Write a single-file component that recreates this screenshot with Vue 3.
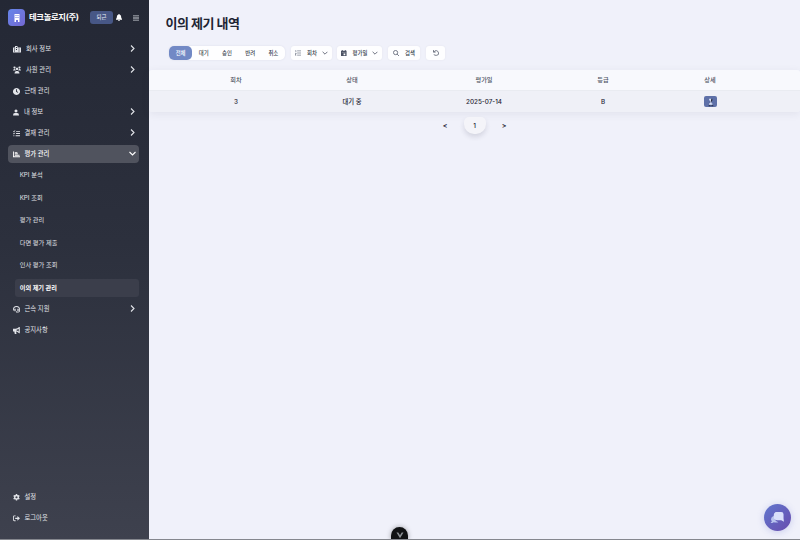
<script setup>
const icons = {
  company: 'M0 5h4V2h5v3h7v10H0zM2 7v2h2V7zm0 4v2h2v-2zm4-7v2h2V4zm0 4v2h2V8zm5-1v2h2V7zm0 4v2h2v-2z',
  users: 'M8 3a2.500 2.500 0 1 0 .01 0M3 1a2 2 0 1 0 .01 0M13 1a2 2 0 1 0 .01 0M0 9q0-3 3-3h1.500q0 2 1.500 3zM16 9q0-3-3-3h-1.500q0 2-1.500 3zM3 15q0-5 3.500-5h3q3.500 0 3.500 5z',
  clock: 'M8 0a8 8 0 1 0 .01 0M7 3h2v4.500l3 2-1 1.500-4-2.500z',
  user: 'M8 0a4 4 0 1 0 .01 0M0 16q0-6.500 5-6.500h6q5 0 5 6.500z',
  list: 'M0 3l1-1 1 1 2.500-2.500 1 1L2 5zM0 8l1-1 1 1 2.500-2.500 1 1L2 10zM1 12h2v2H1zM7 2h9v2H7zM7 7h9v2H7zM6 12h10v2H6z',
  chart: 'M0 1h2v11h14v2.500H0zM4 2h6v2.200H4zM4 5.300h7v2.200H4zM4 8.600h11v2.200H4z',
  headset: 'M8 0Q0 0 0 8v2h2V8q0-6 6-6t6 6v3q0 2-2 2H9v-1H7v3h5q4 0 4-4V8q0-8-8-8M3 6h3v6H5q-2 0-2-2zM10 6h3v4q0 2-2 2h-1z',
  horn: 'M0 4h6q4 0 8-4h1.500v14H14q-4-4-7-4l1 6H4l-1-6H0zM8 6v2q2 0 5 2V4Q10 6 8 6',
  gear: 'M6.500 0h3l.5 2.300 1.500.8 2.300-.8 1.500 2.600-1.700 1.600v2l1.700 1.600-1.500 2.600-2.300-.8-1.500.8-.5 2.300h-3L6 12.700l-1.500-.8-2.300.8-1.500-2.600 1.700-1.600v-2L.7 4.900l1.500-2.600 2.300.8L6 2.300zM8 5a2.500 2.500 0 1 0 .01 0',
  logout: 'M6 1H3Q0 1 0 4v7q0 3 3 3h3v-2H3q-1 0-1-1V4q0-1 1-1h3zM5 6h5V2l6 5.500-6 5.500V9H5z'
}
const top = [
  { label: '회사 정보', icon: 'company', arrow: true, wide: true },
  { label: '사원 관리', icon: 'users', arrow: true, wide: true },
  { label: '근태 관리', icon: 'clock' },
  { label: '내 정보', icon: 'user', arrow: true, narrow: true },
  { label: '결재 관리', icon: 'list', arrow: true },
  { label: '평가 관리', icon: 'chart', arrow: true, active: true }
]
const sub = ['KPI 분석', 'KPI 조회', '평가 관리', '다면 평가 제출', '인사 평가 조회', '이의 제기 관리']
const lower = [
  { label: '근속 지원', icon: 'headset', arrow: true },
  { label: '공지사항', icon: 'horn' }
]
const footer = [
  { label: '설정', icon: 'gear' },
  { label: '로그아웃', icon: 'logout' }
]
const groups = [{ key: 'top', items: top, sub }, { key: 'lower', items: lower }, { key: 'footer', items: footer }]
const tabs = ['전체', '대기', '승인', '반려', '취소']
const heads = ['회차', '상태', '평가일', '등급', '상세']
</script>

<template>
  <div class="app">
    <aside class="sidebar">
      <header class="brand">
        <span class="logo"><svg viewBox="0 0 12 16" width="6" height="8"><path fill="#fff" fill-rule="evenodd" d="M1 0h10v16H8v-4H4v4H1zM3 2v2h2V2zm4 0v2h2V2zM3 6v2h2V6zm4 0v2h2V6z" /></svg></span>
        <strong>테크놀로지(주)</strong>
        <button class="leave">퇴근</button>
        <svg class="bell" viewBox="0 0 14 16" width="6" height="7"><path fill="#fff" d="M6 0h2v1q4 1 4 5 0 4 2 5v2H0v-2q2-1 2-5 0-4 4-5zM5 14h4q0 2-2 2t-2-2" /></svg>
        <svg class="burger" viewBox="0 0 14 14" width="6" height="6"><path fill="#d2d5dc" d="M0 1h14v2H0zM0 6h14v2H0zM0 11h14v2H0z" /></svg>
      </header>
      <nav v-for="g in groups" :key="g.key" :class="['nav', g.key]">
        <a v-for="m in g.items" :key="m.label" class="item" :class="{ active: m.active }">
          <svg class="icon" :class="{ wide: m.wide, narrow: m.narrow }" viewBox="0 0 16 16"><path :d="icons[m.icon]" fill="currentColor" fill-rule="evenodd" /></svg>
          <span>{{ m.label }}</span>
          <svg v-if="m.arrow" class="arrow" :class="{ open: m.active }" viewBox="0 0 7 7"><path d="M2 .5l3 3-3 3" fill="none" stroke="currentColor" stroke-width="1.100" /></svg>
        </a>
        <div v-if="g.sub" class="sub">
          <a v-for="(s, i) in g.sub" :key="s" :class="{ current: i === 5 }">{{ s }}</a>
        </div>
      </nav>
    </aside>

    <main>
      <h1>이의 제기 내역</h1>
      <div class="filters">
        <div class="tabs">
          <button v-for="(t, i) in tabs" :key="t" :class="{ on: i === 0 }">{{ t }}</button>
        </div>
        <button class="filter round">
          <svg viewBox="0 0 14 14" width="6" height="6"><path d="M5 2h9M5 7h9M5 12h9M1 1h1v4M0 8h3l-3 4h3" fill="none" stroke="#626a7b" stroke-width="1.500" /></svg>
          <span>회차</span>
          <svg class="down" viewBox="0 0 6 4" width="6" height="4"><path d="M.6.8L3 3.200 5.400.8" fill="none" stroke="#4b5263" stroke-width=".8" /></svg>
        </button>
        <button class="filter date">
          <svg viewBox="0 0 14 14" width="6" height="6"><path d="M0 2h2V0h2v2h5V0h2v2h2v12H0zM2 5v1h9V5zm4 3v4h4V8z" fill="#4b5263" fill-rule="evenodd" /></svg>
          <span>평가일</span>
          <svg class="down" viewBox="0 0 6 4" width="6" height="4"><path d="M.6.8L3 3.200 5.400.8" fill="none" stroke="#4b5263" stroke-width=".8" /></svg>
        </button>
        <button class="filter search">
          <svg viewBox="0 0 14 14" width="6" height="6"><circle cx="6" cy="6" r="4.900" fill="none" stroke="#4b5263" stroke-width="1.700" /><path d="M9.500 9.500L14 14" stroke="#4b5263" stroke-width="1.700" /></svg>
          <span>검색</span>
        </button>
        <button class="filter reset">
          <svg viewBox="0 0 14 14" width="6" height="6"><path d="M1 0v5h5M1.500 5Q4 1 8 1.500t5 5.500-5 5.500-5.500-2.500" fill="none" stroke="#4b5263" stroke-width="1.700" /></svg>
        </button>
      </div>

      <section class="table">
        <div class="row head"><span v-for="h in heads" :key="h">{{ h }}</span></div>
        <div class="row body">
          <span>3</span><span class="status">대기 중</span><span>2025-07-14</span><span>B</span>
          <span><button class="detail"><svg viewBox="0 0 12 12" width="11" height="11"><path d="M4.500 3h2.500v5h1v1.500H4.500V8h1V5h-1z" fill="#d9e0f5" /><path d="M7 3h1v2L6.500 7H6zM4 10h2v1.200H4zM7 10h2v1.200H7z" fill="#24293d" /></svg></button></span>
        </div>
      </section>
      <div class="pages"><span>&lt;</span><span class="page">1</span><span>&gt;</span></div>
    </main>

    <button class="chat">
      <svg viewBox="0 0 16 14" width="15" height="13"><path d="M4 5Q1 6 1 9q0 1 1 2l-1.500 2q2 0 3.500-1 2 1 5 0Q4 10 4 5" fill="#b9c4ef" /><path d="M6 1h6q2.500 0 2.500 2.500V8l.5 3.500-3-1.500H8Q4 10 4 7V4q0-2 2-3" fill="#dae0fb" /></svg>
    </button>
    <div class="devtool"><svg viewBox="0 0 8 7" width="8" height="7"><path d="M.5.5L4 6.300 7.500.5H5.700L4 3.300 2.300.5z" fill="#8d9196" /></svg></div>
  </div>
</template>

<style>
body { margin: 0; overflow: hidden; }
</style>

<style scoped>
* { box-sizing: border-box; }
.app { position: relative; display: flex; width: 800px; height: 540px; overflow: hidden; background: #f0f1fa; border-bottom: 1px solid #85878e; font-family: Inter, "Noto Sans CJK KR", sans-serif; color: #1e2433; }
button { padding: 0; border: 0; font: inherit; color: inherit; display: flex; align-items: center; justify-content: center; white-space: nowrap; }
svg { display: block; flex: none; }
.sidebar { display: flex; flex-direction: column; width: 149px; height: 539px; flex: none; padding: 9px 10px 12px 8px; background: linear-gradient(180deg, #242835 0%, #2c303d 45%, #3e414e 100%); color: #e2e4e9; }
.brand { display: flex; align-items: center; height: 17px; margin-bottom: 14px; }
.logo { display: flex; align-items: center; justify-content: center; width: 17px; height: 17px; border-radius: 4px; background: linear-gradient(135deg, #6686ea, #7468d2); }
.brand strong { width: 61px; padding-left: 4px; font-size: 8.3px; letter-spacing: -.3px; font-weight: 700; line-height: 17px; height: 17px; color: #fff; white-space: nowrap; }
.leave { width: 23px; height: 13px; margin-left: 4px; padding-bottom: 1px; border-radius: 3px; background: #475786; color: #eef1fa; font-size: 5.4px; }
.bell { margin-left: 3px; }
.burger { margin-left: 11px; }
.nav { display: flex; flex-direction: column; gap: 3px; }
.lower { margin-top: 3.5px; }
.footer { margin-top: auto; }
.item { display: flex; align-items: center; width: 131px; height: 18px; padding: 0 3px 0 5px; border-radius: 4px; font-size: 6.3px; line-height: 18px; white-space: nowrap; }
.active { background: #50535e; color: #fff; font-weight: 500; }
.icon { width: 7px; height: 7px; margin-right: 4.5px; }
.icon.wide { width: 8px; height: 8px; margin-right: 5px; }
.icon.narrow { width: 6px; margin-right: 5px; }
.arrow { width: 7px; height: 7px; margin: 0 0 1px auto; }
.arrow.open { transform: rotate(90deg); }
.sub { display: flex; flex-direction: column; gap: 4.5px; padding-left: 7px; }
.sub a { width: 124px; height: 18px; padding-left: 4.7px; border-radius: 3px; font-size: 6.2px; line-height: 17.6px; }
.sub .current { background: #3b3e4b; color: #fff; font-weight: 600; }
main { flex: 1; padding-top: 14px; }
h1 { margin: 0 0 13px 16.5px; height: 19px; font-size: 13px; letter-spacing: -.5px; line-height: 19px; font-weight: 700; white-space: nowrap; }
.filters { display: flex; height: 14px; margin: 0 0 10px 20px; font-size: 5.4px; font-weight: 500; color: #373e4e; }
.tabs { display: flex; width: 116px; height: 14px; margin-right: 6px; border-radius: 5px; background: #fefeff; box-shadow: 0 0 2px #d9dce7; }
.tabs button { width: 23.2px; background: transparent; border-radius: 5px; }
.tabs .on { background: #7289c5; color: #fff; }
.filter { height: 14px; background: #fefeff; border-radius: 3px; gap: 6px; box-shadow: 0 0 2px #e2e4ed; }
.filter.round { width: 41px; margin-right: 5px; }
.filter.date { width: 45px; margin-right: 6px; }
.filter.search { width: 32px; margin-right: 6px; }
.filter.reset { width: 19px; }
.filter .down { margin-left: -1px; }
.table { overflow: hidden; height: 42px; border-radius: 3px; box-shadow: 0 2px 8px rgba(50, 55, 80, .08); }
.row { display: grid; grid-template-columns: 132px 100px 164px 74px 140px; align-items: center; padding: 0 20px 0 21px; text-align: center; line-height: 10px; }
.row > span { display: flex; align-items: center; justify-content: center; }
.head { height: 21px; padding-bottom: 1px; background: #f8f9fd; border-bottom: 1px solid #e9ebf1; color: #4c5362; font-size: 6.2px; font-weight: 500; }
.body { height: 21px; background: #eff0f7; font-size: 6.3px; font-weight: 500; }
.detail { width: 13px; height: 11px; border-radius: 2px; background: #5e70a8; }
.pages { display: flex; align-items: flex-start; justify-content: center; height: 24px; margin-top: 4px; padding-top: 1px; font-size: 7px; font-weight: 600; line-height: 18px; }
.pages span { width: 18px; text-align: center; }
.pages .page { width: 22px; height: 17px; margin: 0 9.5px; border-radius: 5px 5px 10px 10px; background: #f4f4f9; box-shadow: 0 3px 5px rgba(40, 45, 70, .14); font-size: 6.5px; font-weight: 500; line-height: 19px; }
.chat { position: absolute; left: 764px; top: 504px; width: 27px; height: 27px; border-radius: 50%; background: linear-gradient(135deg, #6177ce, #684cae); box-shadow: 0 1px 7px rgba(97, 106, 205, .28); }
.devtool { position: absolute; left: 391px; top: 527px; width: 17px; height: 13px; padding-top: 3px; display: flex; align-items: center; justify-content: center; border-radius: 9px 9px 0 0; background: #111214; box-shadow: 0 0 5px rgba(0, 0, 0, .35); }
</style>
